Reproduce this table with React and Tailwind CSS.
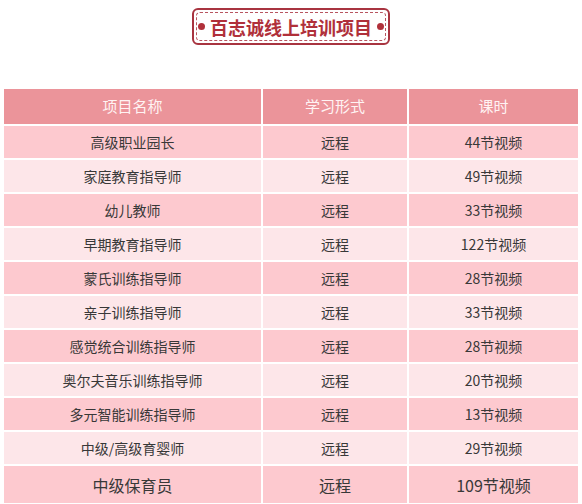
const rows = [
  ['高级职业园长', '远程', '44节视频'],
  ['家庭教育指导师', '远程', '49节视频'],
  ['幼儿教师', '远程', '33节视频'],
  ['早期教育指导师', '远程', '122节视频'],
  ['蒙氏训练指导师', '远程', '28节视频'],
  ['亲子训练指导师', '远程', '33节视频'],
  ['感觉统合训练指导师', '远程', '28节视频'],
  ['奥尔夫音乐训练指导师', '远程', '20节视频'],
  ['多元智能训练指导师', '远程', '13节视频'],
  ['中级/高级育婴师', '远程', '29节视频'],
]

function Row({ cells, bg, big }) {
  return (
    <div className={`grid grid-cols-[257px_144px_1fr] gap-x-[2px] ${big ? 'h-[37px] text-[16px]' : 'h-[32px] text-[14px]'}`}>
      {cells.map((c, i) => (
        <div key={i} className={`${bg} flex items-center justify-center text-[#383838]`}>
          {c}
        </div>
      ))}
    </div>
  )
}

export default function App() {
  return (
    <div
      className="w-[582px] h-[504px] bg-white overflow-hidden"
      style={{ fontFamily: '"Noto Sans CJK SC", "Liberation Sans", sans-serif' }}
    >
      <div className="flex justify-center pt-[8px]">
        <div className="w-[198px] h-[37px] rounded-[6px] border-2 border-[#a83440] p-[2px]">
          <div className="h-full rounded-[4px] border border-dashed border-[#b85560] flex items-center justify-center gap-[5px]">
            <span className="w-[7px] h-[7px] shrink-0 rounded-full bg-[#b0303a]" />
            <span className="text-[18px] font-bold text-[#b0303a] leading-none whitespace-nowrap">百志诚线上培训项目</span>
            <span className="w-[7px] h-[7px] shrink-0 rounded-full bg-[#b0303a]" />
          </div>
        </div>
      </div>

      <div className="mt-[44px] ml-[4px] w-[574px] flex flex-col gap-y-[2px]">
        <div className="grid grid-cols-[257px_144px_1fr] gap-x-[2px] h-[35px] text-[15px]">
          {['项目名称', '学习形式', '课时'].map((h) => (
            <div key={h} className="bg-[#eb949a] flex items-center justify-center text-[#fff3f3]">
              {h}
            </div>
          ))}
        </div>
        {rows.map((r, i) => (
          <Row key={i} cells={r} bg={i % 2 === 0 ? 'bg-[#fdc9cf]' : 'bg-[#fde6e9]'} />
        ))}
        <Row cells={['中级保育员', '远程', '109节视频']} bg="bg-[#fdc9cf]" big />
      </div>
    </div>
  )
}
